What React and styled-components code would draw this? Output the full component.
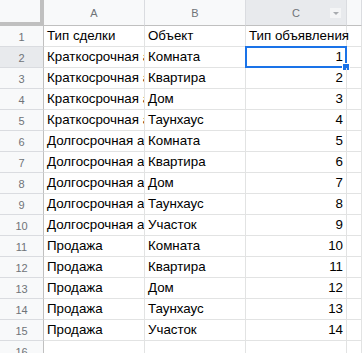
import React from 'react';
import styled, { createGlobalStyle } from 'styled-components';

const GlobalStyle = createGlobalStyle`
    html, body {
        margin: 0;
        padding: 0;
        background: #ffffff;
        overflow: hidden;
    }
`;

const Sheet = styled.div`
    display: grid;
    grid-template-columns: 44px 101px 101px 101px 1fr;
    grid-template-rows: 26px;
    grid-auto-rows: 21px;
    width: 362px;
    height: 353px;
    overflow: hidden;
    font-family: Arial, "Liberation Sans", sans-serif;
`;

const Corner = styled.div`
    box-sizing: border-box;
    background: #f8f9fa;
    border-right: 4px solid #c0c0c0;
    border-bottom: 4px solid #c0c0c0;
`;

const ColHeader = styled.div`
    box-sizing: border-box;
    position: relative;
    display: flex;
    align-items: center;
    justify-content: center;
    background: ${(p) => (p.$active ? '#e8eaed' : '#f8f9fa')};
    border-right: 1px solid #dadce0;
    border-bottom: 1px solid #c0c0c0;
    color: #6f7378;
    font-size: 11px;
`;

const FilterButton = styled.span`
    position: absolute;
    right: 5px;
    top: 8px;
    width: 11px;
    height: 10px;
    background: #f4f5f6;
    display: flex;
    align-items: center;
    justify-content: center;

    &::after {
        content: '';
        border-left: 3px solid transparent;
        border-right: 3px solid transparent;
        border-top: 3px solid #a8abaf;
    }
`;

const RowHeader = styled.div`
    box-sizing: border-box;
    display: flex;
    align-items: center;
    justify-content: center;
    background: ${(p) => (p.$active ? '#e8eaed' : '#f8f9fa')};
    border-right: 1px solid #c0c0c0;
    border-bottom: 1px solid #dadce0;
    color: #6f7378;
    font-size: 11px;
    padding-top: 1px;
`;

/* text spills into the next cell only when that cell is empty, as in Sheets */
const Cell = styled.div`
    box-sizing: border-box;
    position: relative;
    z-index: ${(p) => (p.$spill ? 1 : 'auto')};
    display: flex;
    align-items: flex-end;
    justify-content: ${(p) => (p.$number ? 'flex-end' : 'flex-start')};
    padding: 0 3px 2px 3px;
    border-right: 1px solid #e2e3e3;
    border-bottom: 1px solid #e2e3e3;
    color: #000000;
    font-size: 10pt;
    line-height: 17px;
    white-space: nowrap;
    overflow: ${(p) => (p.$spill ? 'visible' : 'hidden')};
`;

const Selection = styled.div`
    position: absolute;
    left: -1px;
    top: -1px;
    right: -1px;
    bottom: -1px;
    border: 2px solid #1a73e8;
    pointer-events: none;
`;

const Handle = styled.div`
    position: absolute;
    right: -5px;
    bottom: -5px;
    width: 6px;
    height: 6px;
    background: #1a73e8;
    border: 1px solid #ffffff;
`;

const rows = [
    ['Тип сделки', 'Объект', 'Тип объявления'],
    ['Краткосрочная аренда', 'Комната', 1],
    ['Краткосрочная аренда', 'Квартира', 2],
    ['Краткосрочная аренда', 'Дом', 3],
    ['Краткосрочная аренда', 'Таунхаус', 4],
    ['Долгосрочная аренда', 'Комната', 5],
    ['Долгосрочная аренда', 'Квартира', 6],
    ['Долгосрочная аренда', 'Дом', 7],
    ['Долгосрочная аренда', 'Таунхаус', 8],
    ['Долгосрочная аренда', 'Участок', 9],
    ['Продажа', 'Комната', 10],
    ['Продажа', 'Квартира', 11],
    ['Продажа', 'Дом', 12],
    ['Продажа', 'Таунхаус', 13],
    ['Продажа', 'Участок', 14],
    ['', '', ''],
];

const App = () => {
    return (
        <>
            <GlobalStyle />
            <Sheet>
                <Corner />
                <ColHeader>A</ColHeader>
                <ColHeader>B</ColHeader>
                <ColHeader $active>
                    C
                    <FilterButton />
                </ColHeader>
                <ColHeader />
                {rows.map((row, i) => (
                    <React.Fragment key={i}>
                        <RowHeader $active={i === 1}>{i + 1}</RowHeader>
                        {row.map((value, j) => {
                            const selected = i === 1 && j === 2;
                            return (
                                <Cell
                                    key={j}
                                    $number={typeof value === 'number'}
                                    $spill={j === row.length - 1}
                                >
                                    {value}
                                    {selected && (
                                        <Selection>
                                            <Handle />
                                        </Selection>
                                    )}
                                </Cell>
                            );
                        })}
                        <Cell />
                    </React.Fragment>
                ))}
            </Sheet>
        </>
    );
};

export default App;
